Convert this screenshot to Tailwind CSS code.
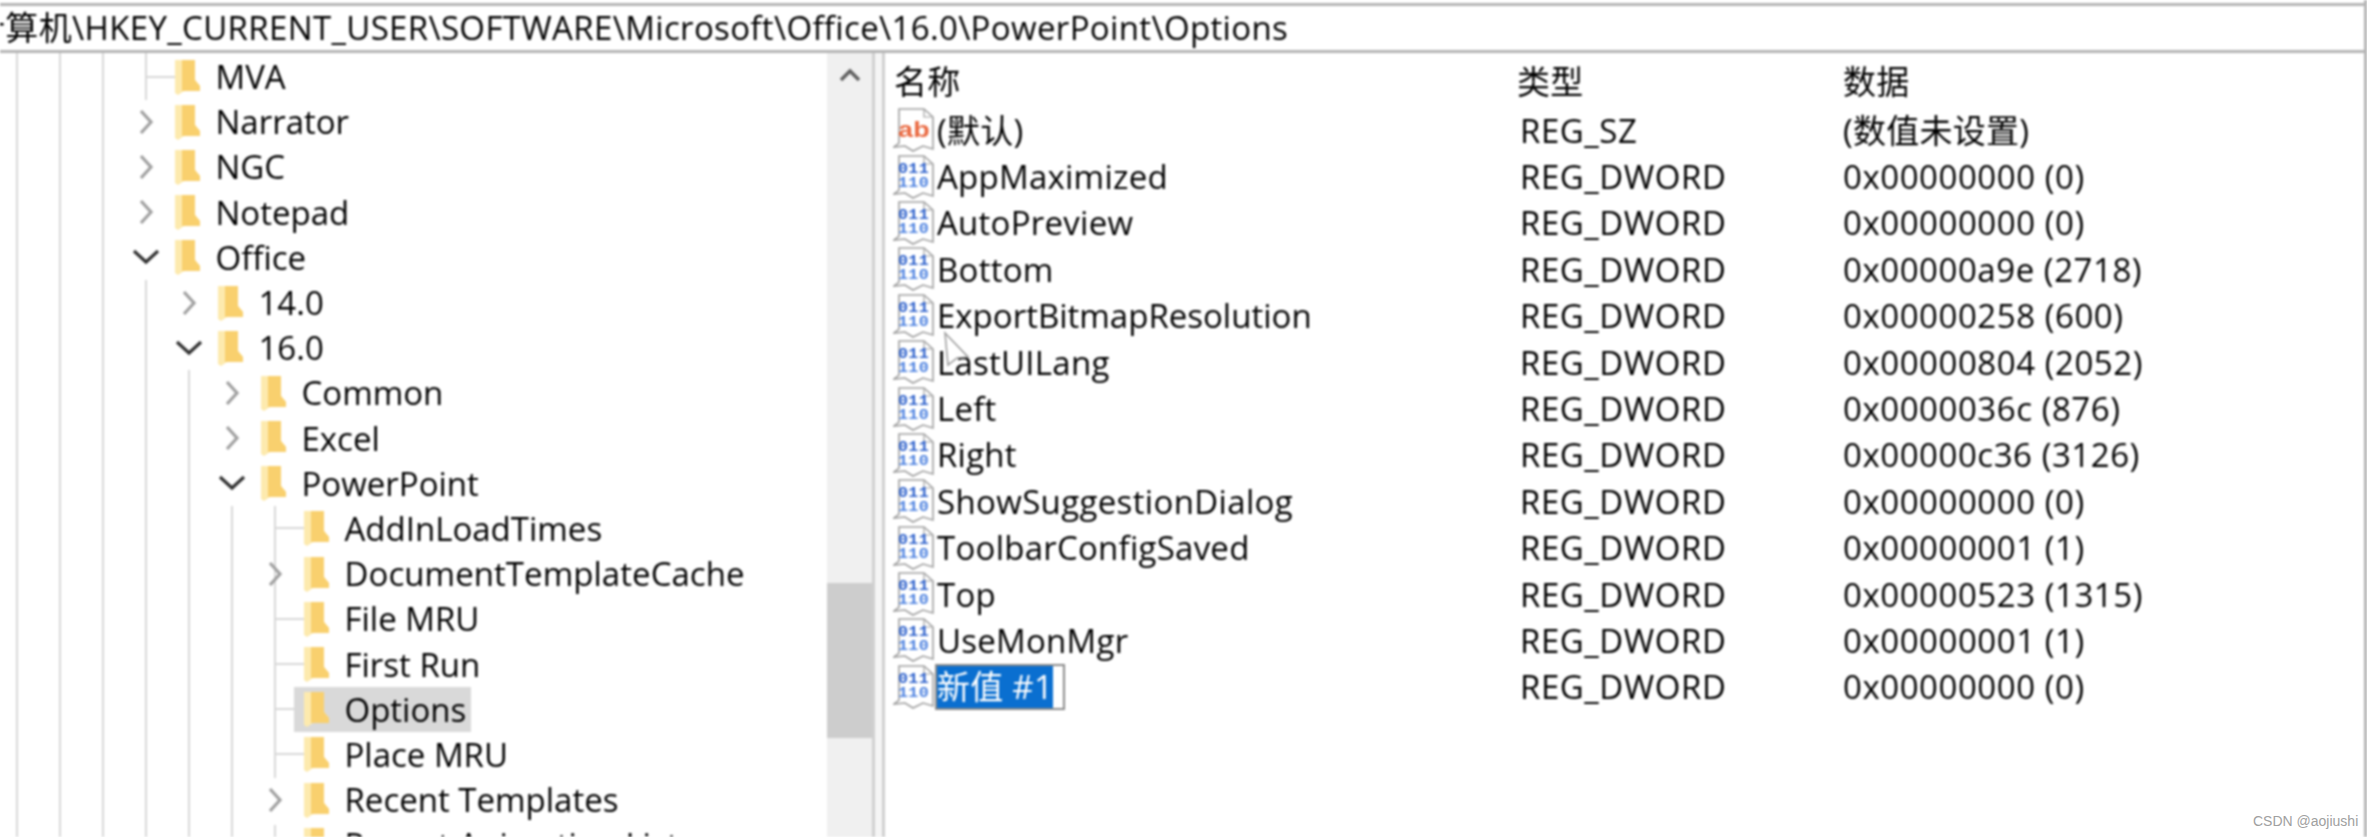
<!DOCTYPE html>
<html lang="zh-CN">
<head>
<meta charset="utf-8">
<title>注册表编辑器</title>
<script src="https://cdn.jsdelivr.net/npm/@tailwindcss/browser@4"></script>
</head>
<body class="bg-white">
<svg width="0" height="0" class="hidden">
  <symbol id="folder" viewBox="0 0 25 36">
    <path d="M0 1H20V21L25 27V32H9L3 36L0 34Z" fill="#fdeaae"/>
    <path d="M7 1H20V21L25 27V32H7Z" fill="#f9d06e"/>
  </symbol>
  <symbol id="bin" viewBox="0 0 42 44">
    <path d="M6 1H31L40 9V41L30 38L20 43L12 38L1 39L6 35Z" fill="#fff" stroke="#a0a0a0" stroke-width="1.6"/>
    <path d="M31 1V9H40" fill="none" stroke="#a0a0a0" stroke-width="1.2"/>
    <text x="5" y="18" font-family="Liberation Mono" font-size="15" font-weight="700" fill="#2f62cc" textLength="31" lengthAdjust="spacingAndGlyphs">011</text>
    <text x="5" y="32" font-family="Liberation Mono" font-size="15" font-weight="700" fill="#4f83e0" textLength="31" lengthAdjust="spacingAndGlyphs">110</text>
  </symbol>
  <symbol id="str" viewBox="0 0 42 44">
    <path d="M6 1H31L40 9V41L30 38L20 43L12 38L1 39L6 35Z" fill="#fff" stroke="#a0a0a0" stroke-width="1.6"/>
    <path d="M31 1V9H40" fill="none" stroke="#a0a0a0" stroke-width="1.2"/>
    <text x="5" y="29" font-family="Liberation Sans" font-size="22" font-weight="700" fill="#ea6a42" textLength="32" lengthAdjust="spacingAndGlyphs">ab</text>
  </symbol>
  <symbol id="right" viewBox="0 0 20 30"><path d="M5 4L15 15L5 26" fill="none" stroke="#a0a0a0" stroke-width="3.2"/></symbol>
  <symbol id="down" viewBox="0 0 30 20"><path d="M3 4L15 15L27 4" fill="none" stroke="#303030" stroke-width="3.2"/></symbol>
</svg>

<div class="relative h-[837px] w-[2367px] overflow-hidden bg-white text-[33px] leading-none text-black blur-[0.9px] [font-family:'Open_Sans','Noto_Sans_CJK_SC',sans-serif]">
  <header class="mt-[3px] h-[50px] overflow-hidden whitespace-nowrap border-y-[3px] border-[#b5b5b5]">
    <p class="-ml-[28px] h-[44px] text-[33px] leading-[44px] tracking-[0.35px]">计算机\HKEY_CURRENT_USER\SOFTWARE\Microsoft\Office\16.0\PowerPoint\Options</p>
  </header>

  <main class="flex h-[784px]">
    <section class="relative h-full w-[827px] shrink-0 overflow-hidden pt-[1px]">
      <i class="absolute left-[16px] top-0 h-full w-[2px] bg-[#d8d8d8]"></i>
      <i class="absolute left-[59px] top-0 h-full w-[2px] bg-[#d8d8d8]"></i>
      <i class="absolute left-[102px] top-0 h-full w-[2px] bg-[#d8d8d8]"></i>
      <i class="absolute left-[145px] top-0 h-[47px] w-[2px] bg-[#d8d8d8]"></i>
      <i class="absolute left-[145px] top-[227px] bottom-0 w-[2px] bg-[#d8d8d8]"></i>
      <i class="absolute left-[188px] top-[317px] bottom-0 w-[2px] bg-[#d8d8d8]"></i>
      <i class="absolute left-[231px] top-[453px] bottom-0 w-[2px] bg-[#d8d8d8]"></i>
      <i class="absolute left-[274px] top-[453px] h-[272px] w-[2px] bg-[#d8d8d8]"></i>
      <i class="absolute left-[274px] top-[772px] h-[12px] w-[2px] bg-[#d8d8d8]"></i>

      <ul class="relative">
        <li class="flex h-[45.2px] items-center pl-[146px]"><i class="h-[2px] w-[29px] bg-[#d8d8d8]"></i><svg class="mr-[15.5px] h-[36px] w-[25px] shrink-0"><use href="#folder"/></svg><span>MVA</span></li>
        <li class="flex h-[45.2px] items-center pl-[136px]"><svg class="mr-[19px] h-[30px] w-[20px] shrink-0"><use href="#right"/></svg><svg class="mr-[15.5px] h-[36px] w-[25px] shrink-0"><use href="#folder"/></svg><span>Narrator</span></li>
        <li class="flex h-[45.2px] items-center pl-[136px]"><svg class="mr-[19px] h-[30px] w-[20px] shrink-0"><use href="#right"/></svg><svg class="mr-[15.5px] h-[36px] w-[25px] shrink-0"><use href="#folder"/></svg><span>NGC</span></li>
        <li class="flex h-[45.2px] items-center pl-[136px]"><svg class="mr-[19px] h-[30px] w-[20px] shrink-0"><use href="#right"/></svg><svg class="mr-[15.5px] h-[36px] w-[25px] shrink-0"><use href="#folder"/></svg><span>Notepad</span></li>
        <li class="flex h-[45.2px] items-center pl-[131px]"><svg class="mr-[14px] h-[20px] w-[30px] shrink-0"><use href="#down"/></svg><svg class="mr-[15.5px] h-[36px] w-[25px] shrink-0"><use href="#folder"/></svg><span>Office</span></li>
        <li class="flex h-[45.2px] items-center pl-[179px]"><svg class="mr-[19px] h-[30px] w-[20px] shrink-0"><use href="#right"/></svg><svg class="mr-[15.5px] h-[36px] w-[25px] shrink-0"><use href="#folder"/></svg><span>14.0</span></li>
        <li class="flex h-[45.2px] items-center pl-[174px]"><svg class="mr-[14px] h-[20px] w-[30px] shrink-0"><use href="#down"/></svg><svg class="mr-[15.5px] h-[36px] w-[25px] shrink-0"><use href="#folder"/></svg><span>16.0</span></li>
        <li class="flex h-[45.2px] items-center pl-[222px]"><svg class="mr-[19px] h-[30px] w-[20px] shrink-0"><use href="#right"/></svg><svg class="mr-[15.5px] h-[36px] w-[25px] shrink-0"><use href="#folder"/></svg><span>Common</span></li>
        <li class="flex h-[45.2px] items-center pl-[222px]"><svg class="mr-[19px] h-[30px] w-[20px] shrink-0"><use href="#right"/></svg><svg class="mr-[15.5px] h-[36px] w-[25px] shrink-0"><use href="#folder"/></svg><span>Excel</span></li>
        <li class="flex h-[45.2px] items-center pl-[217px]"><svg class="mr-[14px] h-[20px] w-[30px] shrink-0"><use href="#down"/></svg><svg class="mr-[15.5px] h-[36px] w-[25px] shrink-0"><use href="#folder"/></svg><span>PowerPoint</span></li>
        <li class="flex h-[45.2px] items-center pl-[275px]"><i class="h-[2px] w-[29px] bg-[#d8d8d8]"></i><svg class="mr-[15.5px] h-[36px] w-[25px] shrink-0"><use href="#folder"/></svg><span>AddInLoadTimes</span></li>
        <li class="flex h-[45.2px] items-center pl-[265px]"><svg class="mr-[19px] h-[30px] w-[20px] shrink-0"><use href="#right"/></svg><svg class="mr-[15.5px] h-[36px] w-[25px] shrink-0"><use href="#folder"/></svg><span class="tracking-[0.05px]">DocumentTemplateCache</span></li>
        <li class="flex h-[45.2px] items-center pl-[275px]"><i class="h-[2px] w-[29px] bg-[#d8d8d8]"></i><svg class="mr-[15.5px] h-[36px] w-[25px] shrink-0"><use href="#folder"/></svg><span>File MRU</span></li>
        <li class="flex h-[45.2px] items-center pl-[275px]"><i class="h-[2px] w-[29px] bg-[#d8d8d8]"></i><svg class="mr-[15.5px] h-[36px] w-[25px] shrink-0"><use href="#folder"/></svg><span>First Run</span></li>
        <li class="flex h-[45.2px] items-center pl-[275px]"><i class="h-[2px] w-[19px] bg-[#d8d8d8]"></i><div class="flex h-[45px] w-[177px] items-center bg-[#d9d9d9] pl-[10px]"><svg class="mr-[15.5px] h-[36px] w-[25px] shrink-0"><use href="#folder"/></svg><span>Options</span></div></li>
        <li class="flex h-[45.2px] items-center pl-[275px]"><i class="h-[2px] w-[29px] bg-[#d8d8d8]"></i><svg class="mr-[15.5px] h-[36px] w-[25px] shrink-0"><use href="#folder"/></svg><span>Place MRU</span></li>
        <li class="flex h-[45.2px] items-center pl-[265px]"><svg class="mr-[19px] h-[30px] w-[20px] shrink-0"><use href="#right"/></svg><svg class="mr-[15.5px] h-[36px] w-[25px] shrink-0"><use href="#folder"/></svg><span>Recent Templates</span></li>
        <li class="flex h-[45.2px] items-center pl-[275px]"><i class="h-[2px] w-[29px] bg-[#d8d8d8]"></i><svg class="mr-[15.5px] h-[36px] w-[25px] shrink-0"><use href="#folder"/></svg><span>Recent Animation List</span></li>
      </ul>
    </section>

    <aside class="h-full w-[45px] shrink-0 bg-[#f0f0f0] pt-[14px]">
      <svg class="mx-auto h-[16px] w-[24px]" viewBox="0 0 24 16"><path d="M3 13L12 4L21 13" fill="none" stroke="#606060" stroke-width="3.5"/></svg>
      <div class="mt-[500px] h-[155px] bg-[#cdcdcd]"></div>
    </aside>
    <div class="h-full w-[13px] shrink-0 border-x-[3px] border-[#d0d0d0] bg-[#f5f5f5]"></div>

    <section class="relative flex-1 pl-[8px] tracking-[0.25px]">
      <div class="flex h-[54px] items-center pt-[2px]">
        <span class="w-[624px] pl-[1px]">名称</span>
        <span class="w-[326px]">类型</span>
        <span>数据</span>
      </div>
      <div class="flex h-[46.4px] items-center"><svg class="mr-[2px] h-[44px] w-[42px] shrink-0"><use href="#str"/></svg><span class="w-[583px]">(默认)</span><span class="w-[323px] tracking-[0.55px]">REG_SZ</span><span>(数值未设置)</span></div>
      <div class="flex h-[46.4px] items-center"><svg class="mr-[2px] h-[44px] w-[42px] shrink-0"><use href="#bin"/></svg><span class="w-[583px]">AppMaximized</span><span class="w-[323px] tracking-[0.55px]">REG_DWORD</span><span class="tracking-[0.55px]">0x00000000 (0)</span></div>
      <div class="flex h-[46.4px] items-center"><svg class="mr-[2px] h-[44px] w-[42px] shrink-0"><use href="#bin"/></svg><span class="w-[583px]">AutoPreview</span><span class="w-[323px] tracking-[0.55px]">REG_DWORD</span><span class="tracking-[0.55px]">0x00000000 (0)</span></div>
      <div class="flex h-[46.4px] items-center"><svg class="mr-[2px] h-[44px] w-[42px] shrink-0"><use href="#bin"/></svg><span class="w-[583px]">Bottom</span><span class="w-[323px] tracking-[0.55px]">REG_DWORD</span><span class="tracking-[0.55px]">0x00000a9e (2718)</span></div>
      <div class="flex h-[46.4px] items-center"><svg class="mr-[2px] h-[44px] w-[42px] shrink-0"><use href="#bin"/></svg><span class="w-[583px] tracking-normal">ExportBitmapResolution</span><span class="w-[323px] tracking-[0.55px]">REG_DWORD</span><span class="tracking-[0.55px]">0x00000258 (600)</span></div>
      <div class="flex h-[46.4px] items-center"><svg class="mr-[2px] h-[44px] w-[42px] shrink-0"><use href="#bin"/></svg><span class="w-[583px]">LastUILang</span><span class="w-[323px] tracking-[0.55px]">REG_DWORD</span><span class="tracking-[0.55px]">0x00000804 (2052)</span></div>
      <div class="flex h-[46.4px] items-center"><svg class="mr-[2px] h-[44px] w-[42px] shrink-0"><use href="#bin"/></svg><span class="w-[583px]">Left</span><span class="w-[323px] tracking-[0.55px]">REG_DWORD</span><span class="tracking-[0.55px]">0x0000036c (876)</span></div>
      <div class="flex h-[46.4px] items-center"><svg class="mr-[2px] h-[44px] w-[42px] shrink-0"><use href="#bin"/></svg><span class="w-[583px]">Right</span><span class="w-[323px] tracking-[0.55px]">REG_DWORD</span><span class="tracking-[0.55px]">0x00000c36 (3126)</span></div>
      <div class="flex h-[46.4px] items-center"><svg class="mr-[2px] h-[44px] w-[42px] shrink-0"><use href="#bin"/></svg><span class="w-[583px] tracking-[0.35px]">ShowSuggestionDialog</span><span class="w-[323px] tracking-[0.55px]">REG_DWORD</span><span class="tracking-[0.55px]">0x00000000 (0)</span></div>
      <div class="flex h-[46.4px] items-center"><svg class="mr-[2px] h-[44px] w-[42px] shrink-0"><use href="#bin"/></svg><span class="w-[583px]">ToolbarConfigSaved</span><span class="w-[323px] tracking-[0.55px]">REG_DWORD</span><span class="tracking-[0.55px]">0x00000001 (1)</span></div>
      <div class="flex h-[46.4px] items-center"><svg class="mr-[2px] h-[44px] w-[42px] shrink-0"><use href="#bin"/></svg><span class="w-[583px]">Top</span><span class="w-[323px] tracking-[0.55px]">REG_DWORD</span><span class="tracking-[0.55px]">0x00000523 (1315)</span></div>
      <div class="flex h-[46.4px] items-center"><svg class="mr-[2px] h-[44px] w-[42px] shrink-0"><use href="#bin"/></svg><span class="w-[583px]">UseMonMgr</span><span class="w-[323px] tracking-[0.55px]">REG_DWORD</span><span class="tracking-[0.55px]">0x00000001 (1)</span></div>
      <div class="flex h-[46.4px] items-center"><svg class="mr-[2px] h-[44px] w-[42px] shrink-0"><use href="#bin"/></svg><div class="w-[583px]"><span class="-ml-[2px] block h-[46px] w-[130px] border-2 border-[#8a8a8a] bg-white"><span class="block h-[42px] w-[116px] bg-[#0a6fd0] leading-[42px] text-white">新值 #1</span></span></div><span class="w-[323px] tracking-[0.55px]">REG_DWORD</span><span class="tracking-[0.55px]">0x00000000 (0)</span></div>
    </section>
  </main>
  <svg class="absolute left-[943px] top-[331px] h-[36px] w-[28px]" viewBox="0 0 28 36"><path d="M2 2L25 26L14 27L5 34Z" fill="#ffffff" fill-opacity="0.55" stroke="#9a9a9a" stroke-width="1.5"/></svg>
  <i class="absolute right-0 top-0 h-full w-[3px] bg-[#b4b4b4]"></i>
</div>
<span class="absolute left-[2253px] top-[813px] text-[14px] leading-[16px] text-[#a0a0a0] [font-family:'Liberation_Sans',sans-serif]">CSDN @aojiushi</span>
</body>
</html>
